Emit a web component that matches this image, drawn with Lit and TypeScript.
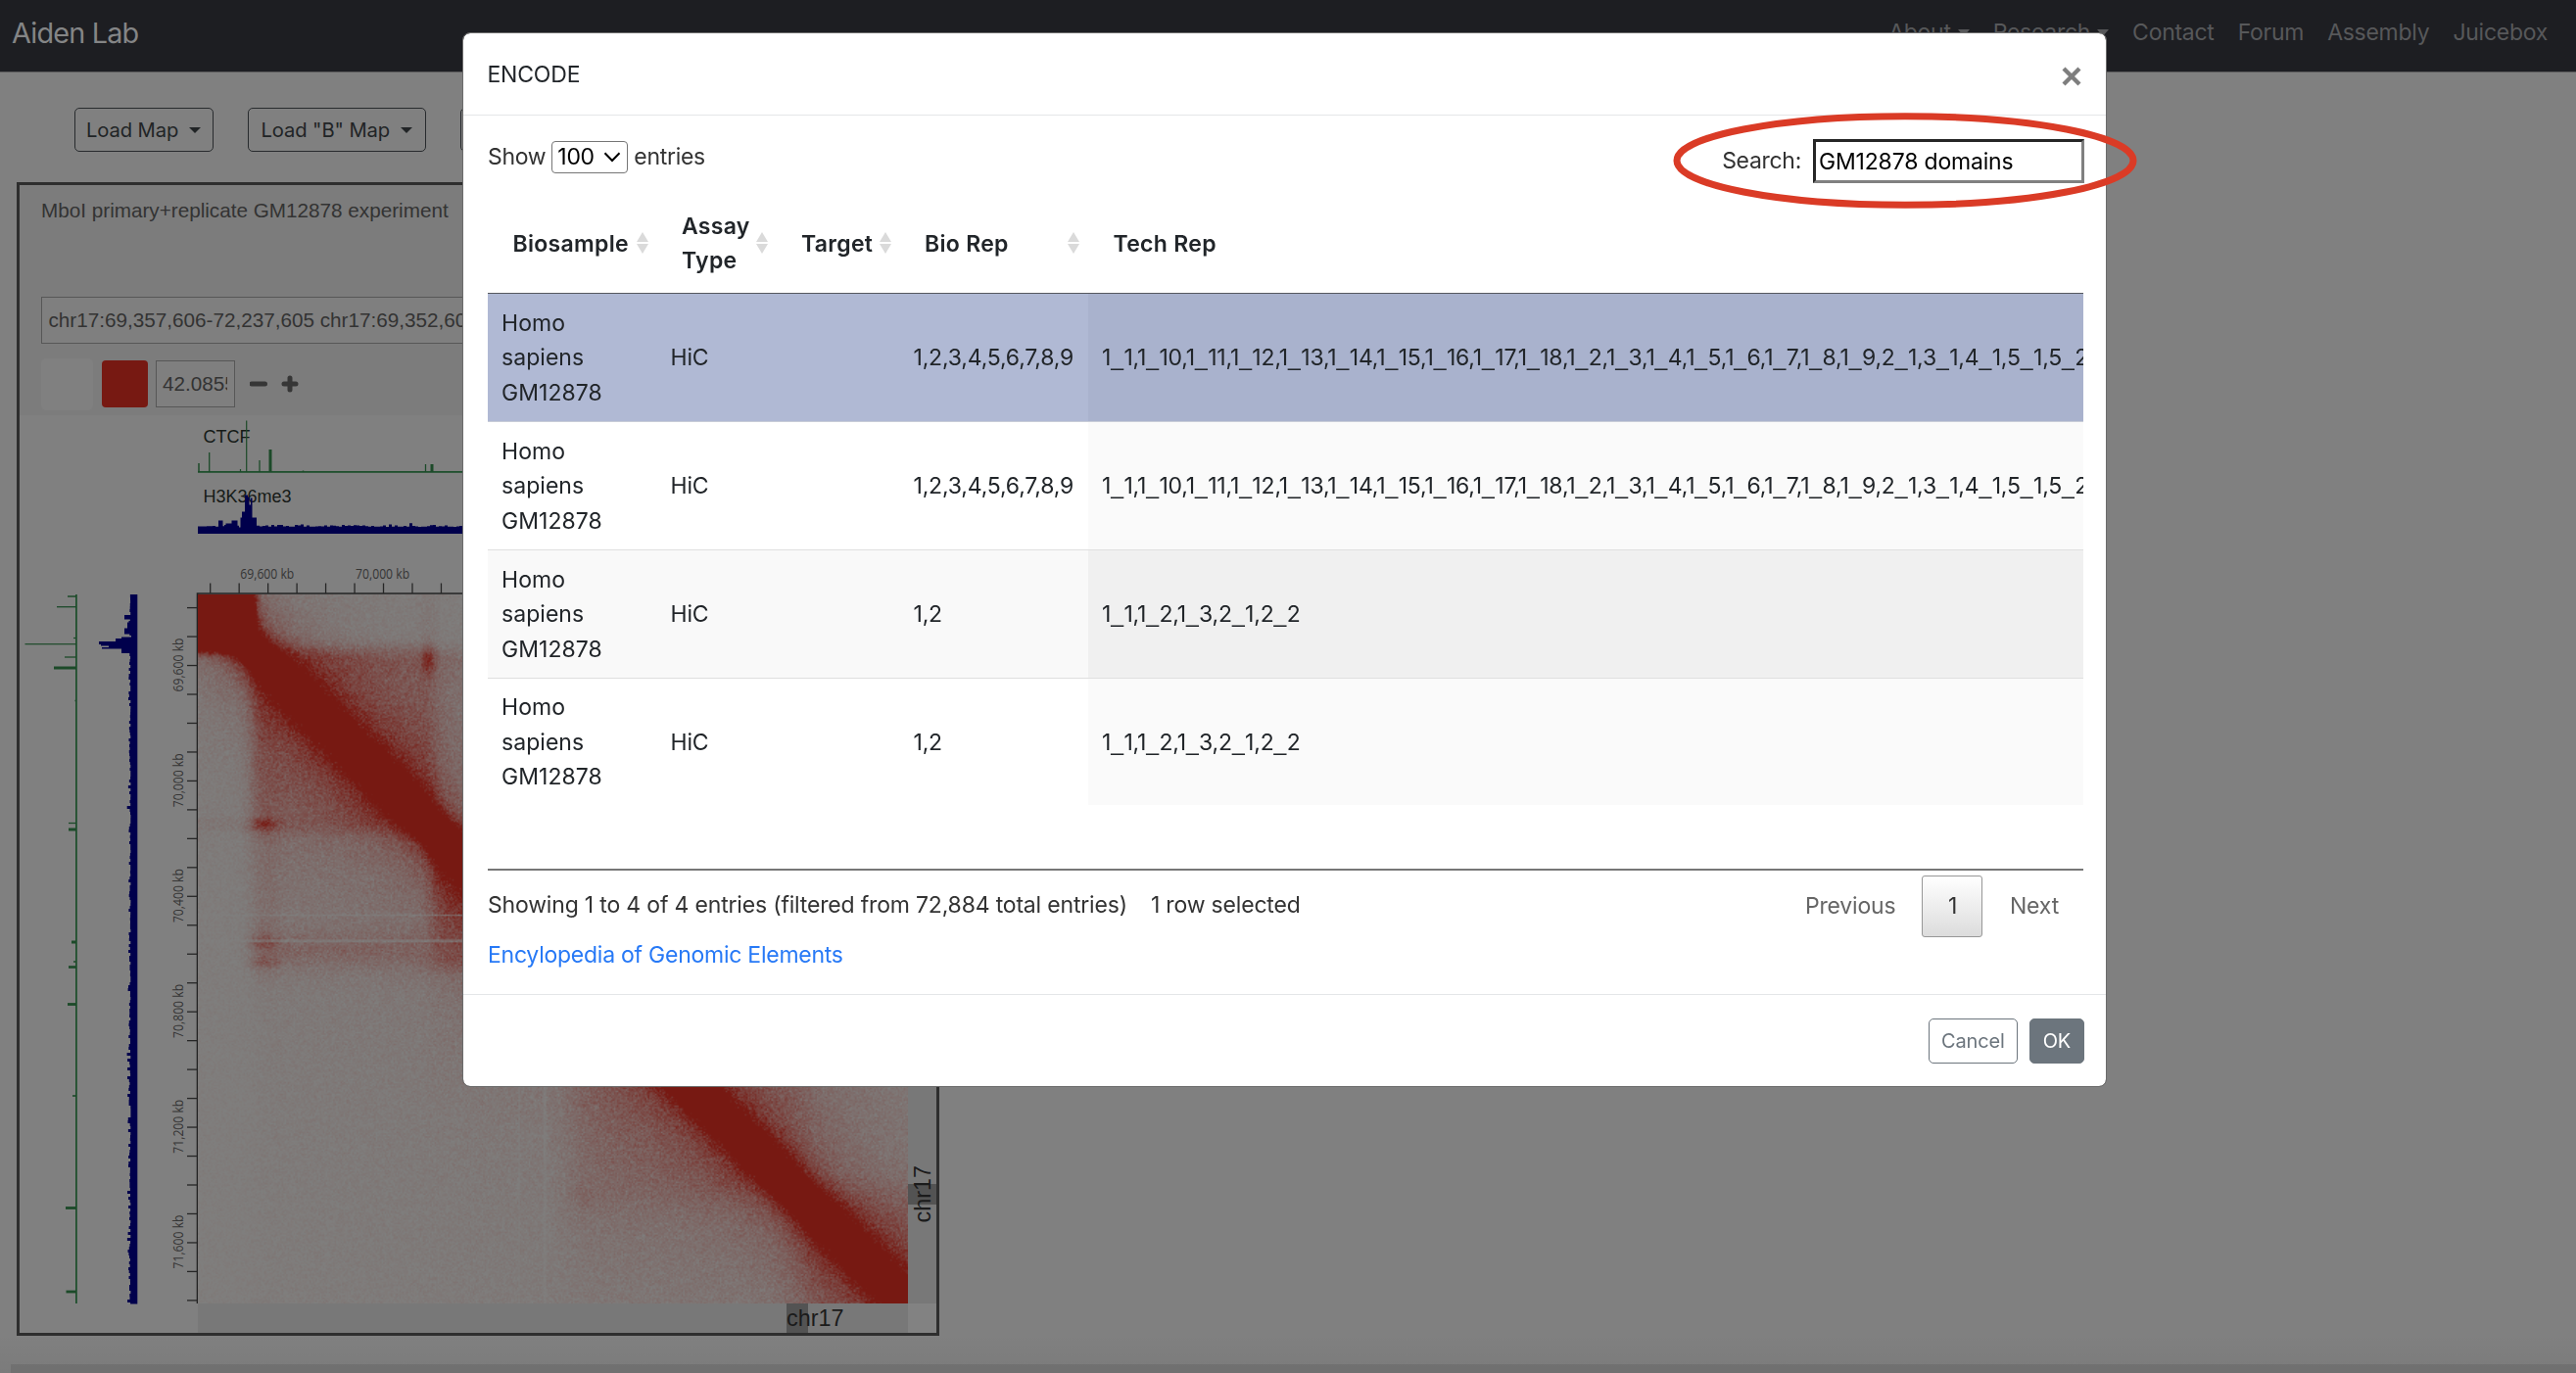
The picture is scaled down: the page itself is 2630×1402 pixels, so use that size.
import { LitElement, html, svg, css } from "lit";
import { customElement, property, query } from "lit/decorators.js";

const LONG_REP =
  "1_1,1_10,1_11,1_12,1_13,1_14,1_15,1_16,1_17,1_18,1_2,1_3,1_4,1_5,1_6,1_7,1_8,1_9,2_1,3_1,4_1,5_1,5_2";

interface Row {
  bio: string;
  tech: string;
  selected?: boolean;
  shaded?: boolean;
}

const ROWS: Row[] = [
  { bio: "1,2,3,4,5,6,7,8,9", tech: LONG_REP, selected: true },
  { bio: "1,2,3,4,5,6,7,8,9", tech: LONG_REP },
  { bio: "1,2", tech: "1_1,1_2,1_3,2_1,2_2", shaded: true },
  { bio: "1,2", tech: "1_1,1_2,1_3,2_1,2_2" },
];

/* [offset along the axis, signal height, bar width] */
const CTCF: number[][] = [
  [1, 9, 1.5], [11.7, 20, 1.3], [43.5, 3, 1.2], [49.7, 52.5, 1.2], [63, 12, 1.3],
  [74, 23, 3], [107.5, 1.5, 1.5], [232.5, 8, 1.3], [239, 8, 3], [354, 5, 3],
  [374, 3, 1.5], [379.5, 8, 2.6], [417.5, 9, 2.8], [511, 4, 1.6], [625.5, 11, 2.8],
  [711, 10.5, 2.8],
];

function randomizer(seed: number): () => number {
  let s = seed;
  return () => {
    s = (s + 0x6d2b79f5) | 0;
    let t = Math.imul(s ^ (s >>> 15), 1 | s);
    t = (t + Math.imul(t ^ (t >>> 7), 61 | t)) ^ t;
    return ((t ^ (t >>> 14)) >>> 0) / 4294967296;
  };
}

/* H3K36me3 signal: low ripple with one strong peak near the origin */
function histoneSignal(): number[] {
  const rnd = randomizer(17);
  const out: number[] = [];
  let ripple = 0;
  for (let i = 0; i < 483; i++) {
    const p = i * 1.5;
    if (i % 2 === 0) ripple = rnd() * rnd() * 4;
    let h = 5.6 + ripple;
    if (p > 20 && p < 25) h = 12;
    else if (p > 28 && p < 34) h = 9;
    else if (p >= 34 && p < 40) h = 12;
    else if (p >= 41 && p < 43) h = 5;
    else if (p >= 43 && p < 45) h = 15;
    else if (p >= 45 && p < 47.5) h = 21;
    else if (p >= 47.5 && p < 50) h = 38;
    else if (p >= 50 && p < 52) h = 36;
    else if (p >= 52 && p < 53.6) h = 28;
    else if (p >= 53.6 && p < 55.5) h = 35;
    else if (p >= 55.5 && p < 59) h = 15;
    out.push(h);
  }
  return out;
}

@customElement("contact-map")
class ContactMap extends LitElement {
  @query("canvas") private canvas!: HTMLCanvasElement;

  static styles = css`
    :host { display: block; position: relative; width: 936px; height: 937px; }
    svg { display: block; width: 936px; height: 937px; }
    canvas { position: absolute; left: 182px; top: 183px; width: 725px; height: 724px; }
    .track { font: 18px "Liberation Sans", Arial, sans-serif; fill: #151a17; }
    .kb { font: 14px "Open Sans", "Noto Sans", sans-serif; fill: #353535; }
    .chr { font: 23.4px "Liberation Sans", Arial, sans-serif; fill: #1b1b1b; }
  `;

  firstUpdated() {
    const n = 483;
    const size = 724;
    const cv = this.canvas;
    cv.width = n;
    cv.height = n;
    const ctx = cv.getContext("2d")!;
    const img = ctx.createImageData(n, n);
    const rnd = randomizer(5);
    /* start, end, strength, edge softness */
    const domains = [[-40, 57, 1.2, 4], [55, 238, 1, 4], [238, 382, 1.25, 4], [382, 615, 0.75, 9], [610, 780, 0.8, 10]];
    const step = (p: number, w: number) => 1 / (1 + Math.exp(-p / w));
    const inside = (p: number, d: number[]) => step(p - d[0], d[3]) * step(d[1] - p, d[3]);
    const bell = (p: number, w: number) => Math.exp(-(p / w) * (p / w));
    const loops = [[67, 234, 0.5, 13, 6], [67, 354, 0.3, 13, 6], [67, 375, 0.22, 12, 5], [390, 612, 0.06, 14, 14]];
    for (let j = 0; j < n; j++) {
      for (let i = 0; i < n; i++) {
        const u = (i / n) * size;
        const v = (j / n) * size;
        const lo = Math.min(u, v);
        const hi = Math.max(u, v);
        const d = Math.max(hi - lo, 1);
        let s = 0.95 * Math.pow(25 / d, 1.7);
        for (const dom of domains) {
          const w = inside(u, dom) * inside(v, dom);
          if (w > 0.01) s += w * dom[2] * Math.max(0, 0.76 * Math.pow(25 / d, 0.62) - 0.4 * s);
        }
        s += 1.2 * step(57 - hi, 2);
        const east = step(lo - 57, 5);
        s += east * step(238 - lo, 5) * step(hi - 238, 3) *
          (0.04 * step(390 - hi, 8) + 0.1 * Math.exp(-Math.max(0, hi - 238) / 22) + 0.15 * bell(hi - 362, 17));
        s += 0.08 * step(lo - 240, 6) * step(hi - 382, 5) * Math.exp(-Math.max(0, hi - 382) / 60);
        s += 0.1 * step(lo - 375, 8) * step(hi - 612, 9) * Math.exp(-Math.max(0, hi - 615) / 80);
        s += 0.015 + east * 0.05 * Math.exp(-Math.abs(d - 100) / 420);
        s += 0.07 * bell(lo - 67, 15) * step(hi - 110, 10) * step(388 - hi, 8);
        s += 0.05 * bell(hi - 234, 9);
        for (const l of loops) s += l[2] * bell(lo - l[0], l[3]) * bell(hi - l[1], l[4]);
        for (const line of [327, 353]) {
          if (Math.abs(u - line) < 0.9 || Math.abs(v - line) < 0.9) s *= 0.35;
        }
        const g = rnd() + rnd() + rnd() - 1.5;
        s += g * Math.sqrt(Math.max(s, 0.02)) * 0.3;
        s = Math.max(0, Math.min(1, s));
        const k = (j * n + i) * 4;
        img.data[k] = 127 - 8 * s;
        img.data[k + 1] = 127 - 102 * s;
        img.data[k + 2] = 126 - 108 * s;
        img.data[k + 3] = 255;
      }
    }
    ctx.putImageData(img, 0, 0);
  }

  render() {
    const hist = histoneSignal();
    const top = "M202 545" + hist.map((h, i) => `V${(543.5 - h).toFixed(1)}H${202 + (i + 1) * 1.5}`).join("") + "V545Z";
    const side = "M140.3 607" + hist.map((h, i) => `H${(139 - h).toFixed(1)}V${607 + (i + 1) * 1.5}`).join("") + "H140.3Z";
    const kb = ["69,600 kb", "70,000 kb", "70,400 kb", "70,800 kb", "71,200 kb", "71,600 kb"];
    return html`
      <svg viewBox="20 424 936 937">
        <rect x="202" y="1331" width="725" height="30" fill="#787878" />
        <rect x="927" y="607" width="30" height="724" fill="#787878" />
        <rect x="927" y="1331" width="30" height="30" fill="#828282" />
        <rect x="803" y="1331" width="22" height="30" fill="#535353" />
        <rect x="927" y="1209" width="30" height="21" fill="#535353" />
        <text class="chr" x="803" y="1354">chr17</text>
        <text class="chr" transform="translate(949.5 1248.5) rotate(-90)">chr17</text>

        <text class="track" x="207.5" y="451.7">CTCF</text>
        <text class="track" x="207.5" y="513.4">H3K36me3</text>
        <rect x="202" y="481" width="724" height="1.8" fill="#20502e" />
        <rect x="77" y="607" width="1.8" height="724" fill="#20502e" />
        ${CTCF.map(([p, h, w]) => svg`
          <rect x=${202 + p - w / 2} y=${482 - h} width=${w} height=${h} fill="#1c4a29" />
          <rect y=${608 + p - w / 2} x=${78 - h} height=${w} width=${h} fill="#1c4a29" />`)}
        <path d=${top} fill="#00004c" />
        <path d=${side} fill="#00004c" />

        <path d="M201.5 1331V606H927" fill="none" stroke="#232323" stroke-width="1.6" />
        ${Array.from({ length: 25 }, (_, i) => svg`
          <path d="M191 ${620.6 + i * 29.47}H201.5" stroke="#262626" stroke-width="1.3" />
          <path d="M${214.7 + i * 29.47} 595.5V606" stroke="#262626" stroke-width="1.3" />`)}
        ${kb.map((t, i) => svg`
          <text class="kb" x=${245.3 + i * 117.8} y="590.6" textLength="55" lengthAdjust="spacingAndGlyphs">${t}</text>
          <text class="kb" transform="translate(186.5 ${706.5 + i * 117.8}) rotate(-90)" textLength="55" lengthAdjust="spacingAndGlyphs">${t}</text>`)}
      </svg>
      <canvas></canvas>
    `;
  }
}

@customElement("encode-dialog")
class EncodeDialog extends LitElement {
  @property({ type: Array }) rows: Row[] = [];

  static styles = css`
    :host {
      display: block;
      box-sizing: border-box;
      width: 1679px;
      height: 1077px;
      background: #fff;
      border: 1px solid #6b6b6b;
      border-radius: 8px;
      font: 23px/35.4px Inter, "Liberation Sans", sans-serif;
      letter-spacing: -0.18px;
      color: #212529;
      background-clip: padding-box;
    }
    .head {
      display: flex;
      justify-content: space-between;
      align-items: center;
      box-sizing: border-box;
      height: 83.5px;
      padding: 0 24px 0 24.5px;
      border-bottom: 1.5px solid #e4e6e8;
    }
    .title { letter-spacing: -0.2px; padding-top: 3px; }
    .close { width: 20px; height: 20px; margin: 6px 1px 0 0; }
    .body { height: 898px; padding: 24.6px 22px 0 25px; box-sizing: border-box; border-bottom: 1.5px solid #e4e6e8; }
    .controls { display: flex; justify-content: space-between; height: 56px; color: #333; }
    .len { display: flex; align-items: center; height: 35.4px; gap: 6px; letter-spacing: -0.3px; padding-top: 0.6px; }
    .sel {
      display: flex; align-items: center; justify-content: space-between; box-sizing: border-box;
      width: 78px; height: 33px; border: 1.5px solid #767676; border-radius: 4px; padding: 0 6px 0 5px; color: #000;
    }
    .search { display: flex; align-items: center; height: 45px; gap: 12px; margin-top: -0.4px; letter-spacing: -0.3px; }
    input {
      box-sizing: border-box; width: 277px; height: 45px; margin: 0; padding: 3px 3px 1px; color: #000;
      font: inherit; letter-spacing: -0.18px; border: 3px solid; border-color: #262626 #808080 #808080 #262626; background: #fff;
      border-radius: 0; outline: none;
    }
    .row, .th { display: grid; grid-template-columns: 172.5px 122px 126px 192.5px 1016px; }
    .th { height: 101.5px; font-weight: 600; align-items: center; border-bottom: 1.8px solid #55585f; box-sizing: border-box; letter-spacing: 0.3px; }
    .th div { display: flex; align-items: center; justify-content: space-between; padding: 0 9px 0 25.5px; }
    .th span { padding-top: 2px; }
    .table { height: 690.5px; border-bottom: 2.4px solid #777; overflow: hidden; box-sizing: border-box; width: 1629px; }
    .row { height: 131px; box-sizing: border-box; border-bottom: 1.5px solid #dfdfdf; }
    .row:last-child { border: 0; height: 129px; }
    .row > div { display: flex; align-items: center; padding: 3px 0 0 14px; white-space: nowrap; }
    .row > div:first-child { letter-spacing: 0.05px; }
    .row > div:last-child { background: #fafafa; overflow: hidden; }
    .row.shaded { background: #f9f9f9; }
    .row.shaded > div:last-child { background: #f0f0f0; }
    .row.selected { background: #b0b9d4; border-color: #c8ccd8; }
    .row.selected > div:last-child { background: #a9b2cd; }
    .u { font-family: "Liberation Sans", Arial, sans-serif; letter-spacing: 0.4px; }
    .info { display: flex; justify-content: space-between; height: 68px; color: #333; }
    .status { padding-top: 18.5px; display: flex; gap: 24px; }
    .pager { display: flex; padding: 5.5px 26px 0 0; align-items: flex-start; color: #666; line-height: 62px; }
    .page {
      width: 62px; height: 63px; box-sizing: border-box; border: 1.5px solid #979797; border-radius: 3px; text-align: center;
      color: #333; background: linear-gradient(#fff, #dcdcdc); margin: 0 27.5px 0 27px; line-height: 60px;
    }
    .link { color: #2779f6; letter-spacing: -0.25px; padding-top: 1px; }
    .foot { display: flex; justify-content: flex-end; gap: 12px; padding: 24px 22.5px 0; }
    .btn {
      box-sizing: border-box; height: 46.5px; line-height: 44.5px; font-size: 20px; padding: 0 12.5px; border: 1.5px solid #6c757d;
      border-radius: 5px; color: #6c757d;
    }
    .ok { background: #6c757d; color: #fff; }
  `;

  private sortIcon() {
    return html`<svg width="12" height="22" viewBox="0 0 12 22"><path d="M6 0L12 10H0ZM0 12H12L6 22Z" fill="#dadada" /></svg>`;
  }

  private tech(text: string) {
    return text.split("_").map((part, i) => (i ? html`<span class="u">_</span>${part}` : part));
  }

  render() {
    return html`
      <div class="head">
        <span class="title">ENCODE</span>
        <svg class="close" viewBox="0 0 20 20"><path d="M2 2L18 18M18 2L2 18" stroke="#7e7e7e" stroke-width="4.3" /></svg>
      </div>
      <div class="body">
        <div class="controls">
          <div class="len">
            <span>Show</span>
            <span class="sel">100
              <svg width="18" height="11" viewBox="0 0 18 11"><path d="M1.5 1.2L9 9L16.5 1.2" fill="none" stroke="#000" stroke-width="2" /></svg>
            </span>
            <span>entries</span>
          </div>
          <label class="search"><span>Search:</span><input type="text" value="GM12878 domains" /></label>
        </div>
        <div class="table">
          <div class="th">
            <div><span>Biosample</span>${this.sortIcon()}</div>
            <div><span>Assay<br />Type</span>${this.sortIcon()}</div>
            <div><span>Target</span>${this.sortIcon()}</div>
            <div><span>Bio Rep</span>${this.sortIcon()}</div>
            <div><span>Tech Rep</span></div>
          </div>
          ${this.rows.map((r) => html`
            <div class="row ${r.selected ? "selected" : ""} ${r.shaded ? "shaded" : ""}">
              <div><span>Homo<br />sapiens<br />GM12878</span></div>
              <div>HiC</div>
              <div></div>
              <div>${r.bio}</div>
              <div><span>${this.tech(r.tech)}</span></div>
            </div>`)}
        </div>
        <div class="info">
          <div class="status"><span>Showing 1 to 4 of 4 entries (filtered from 72,884 total entries)</span><span>1 row selected</span></div>
          <div class="pager"><span>Previous</span><span class="page">1</span><span>Next</span></div>
        </div>
        <div class="link">Encylopedia of Genomic Elements</div>
      </div>
      <div class="foot"><span class="btn">Cancel</span><span class="btn ok">OK</span></div>
    `;
  }
}

@customElement("app-root")
class AppRoot extends LitElement {
  static styles = css`
    :host {
      display: block; position: relative; width: 2630px; height: 1402px; overflow: hidden;
      background: #808080; font-family: Inter, "Liberation Sans", sans-serif;
    }
    .nav {
      display: flex; justify-content: space-between; align-items: center; box-sizing: border-box; height: 74px;
      padding: 0 29px 7px 12px; background: #1d1e22; border-bottom: 1.5px solid #5a5a5b; color: #848586; font-size: 28.8px;
    }
    .brand { letter-spacing: -0.8px; }
    .links { display: flex; gap: 24px; font-size: 23px; color: #57585a; letter-spacing: -0.27px; }
    .links span { display: flex; align-items: center; gap: 7px; }
    .caret { width: 0; height: 0; border: 6.5px solid transparent; border-top: 7px solid currentColor; border-bottom: 0; }
    .bar { display: flex; gap: 35px; padding: 36px 0 0 76px; height: 111.5px; box-sizing: border-box; font-size: 20.2px; color: #212426; }
    .drop {
      display: flex; align-items: center; justify-content: space-between; box-sizing: border-box; width: 142px; height: 45px; padding: 0 12px 0 11px;
      border: 1.5px solid #282b2e; border-radius: 5px; letter-spacing: -0.1px;
    }
    .wide { width: 182px; padding: 0 13px 0 12.5px; }
    .drop .caret { border-width: 6px; border-bottom: 0; }
    .panel {
      box-sizing: border-box; width: 942px; height: 1178.5px; margin-left: 17px; border: 3px solid #2e2e2e; background: #808080;
      font: 20.7px "Liberation Sans", Arial, sans-serif; color: #333;
    }
    .top { height: 235.5px; background: #7c7c7c; box-sizing: border-box; padding: 12.5px 0 0 22px; }
    .name { height: 102px; line-height: 27px; }
    .locus {
      width: 600px; height: 48px; line-height: 45px; box-sizing: border-box; border: 1.5px solid #575757; background: #7f7f7f;
      padding-left: 6.5px; white-space: nowrap;
    }
    .scale { display: flex; align-items: flex-start; margin-top: 15px; }
    .white { width: 53px; height: 53px; border-radius: 5px; background: #808080; }
    .red { width: 47px; height: 48px; border-radius: 4px; background: #771912; margin: 2px 8px 0 9px; }
    .num { width: 81px; height: 48px; line-height: 45px; box-sizing: border-box; border: 1.5px solid #575757; background: #7f7f7f; margin-top: 2px; padding: 0 7px 0 6px; }
    .num span { display: block; overflow: hidden; }
    .pm { margin: 17px 0 0 15px; }
    .under { height: 9px; margin: 29px 0 0 11px; background: #747474; }
    .shade { position: absolute; left: 0; right: 0; bottom: 0; height: 40px; background: linear-gradient(transparent, rgba(0, 0, 0, 0.04)); }
    encode-dialog { position: absolute; left: 472px; top: 33px; }
    .ring { position: absolute; left: 1708px; top: 115px; width: 474px; height: 98px; }
  `;

  render() {
    return html`
      <nav class="nav">
        <span class="brand">Aiden Lab</span>
        <div class="links">
          <span>About<i class="caret"></i></span>
          <span>Research<i class="caret"></i></span>
          <span>Contact</span><span>Forum</span><span>Assembly</span><span>Juicebox</span>
        </div>
      </nav>
      <div class="bar">
        <div class="drop">Load Map<i class="caret"></i></div>
        <div class="drop wide">Load "B" Map<i class="caret"></i></div>
        <div class="drop"></div>
      </div>
      <div class="panel">
        <div class="top">
          <div class="name">MboI primary+replicate GM12878 experiment</div>
          <div class="locus">chr17:69,357,606-72,237,605 chr17:69,352,606-72,232,605</div>
          <div class="scale">
            <div class="white"></div>
            <div class="red"></div>
            <div class="num"><span>42.0855</span></div>
            <svg class="pm" width="50" height="18" viewBox="0 0 50 18">
              <path d="M2 9H15.5M35 9H47M41 3V15" stroke="#363636" stroke-width="5" stroke-linecap="round" />
            </svg>
          </div>
        </div>
        <contact-map></contact-map>
      </div>
      <div class="under"></div>
      <div class="shade"></div>
      <encode-dialog .rows=${ROWS}></encode-dialog>
      <svg class="ring" viewBox="0 0 474 98">
        <ellipse cx="237" cy="49" rx="233" ry="45.3" fill="none" stroke="#da3b26" stroke-width="7" />
      </svg>
    `;
  }
}
